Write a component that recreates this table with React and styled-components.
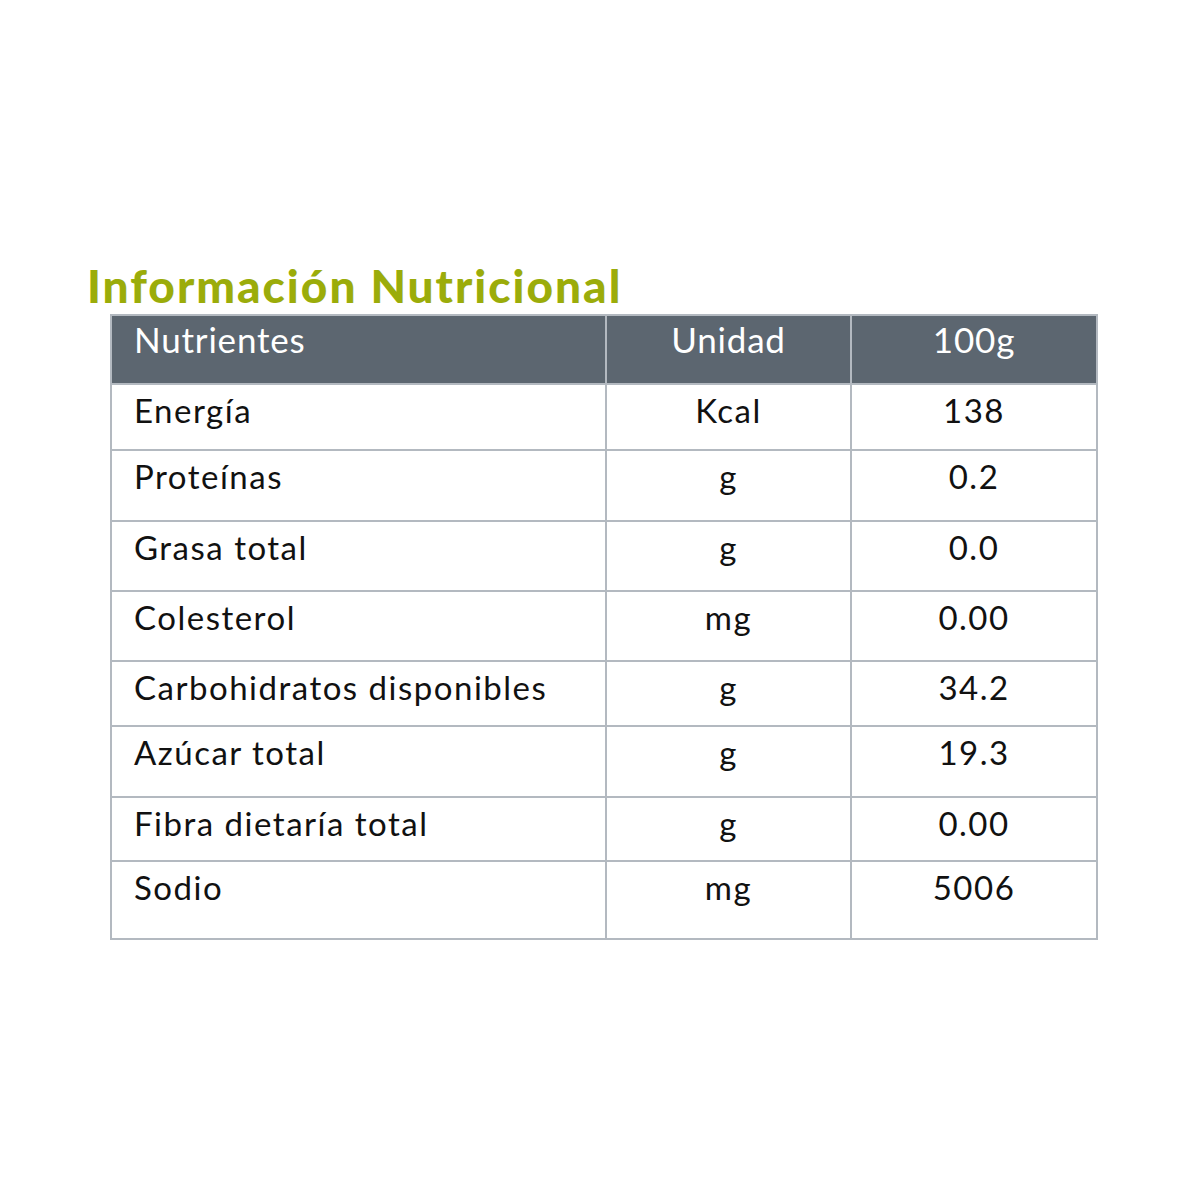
import React from 'react'
import styled, { createGlobalStyle } from 'styled-components'

const GlobalStyle = createGlobalStyle`
  html, body {
    margin: 0;
    padding: 0;
    background: #ffffff;
  }
`

const ROWS = [
  { name: 'Energía', unit: 'Kcal', value: '138', height: 66 },
  { name: 'Proteínas', unit: 'g', value: '0.2', height: 71 },
  { name: 'Grasa total', unit: 'g', value: '0.0', height: 70 },
  { name: 'Colesterol', unit: 'mg', value: '0.00', height: 70 },
  { name: 'Carbohidratos disponibles', unit: 'g', value: '34.2', height: 65 },
  { name: 'Azúcar total', unit: 'g', value: '19.3', height: 71 },
  { name: 'Fibra dietaría total', unit: 'g', value: '0.00', height: 64 },
  { name: 'Sodio', unit: 'mg', value: '5006', height: 78 }
]

const App = () => {
  return (
    <Page>
      <GlobalStyle />
      <Title>Información Nutricional</Title>
      <Table>
        <colgroup>
          <col style={{ width: 495 }} />
          <col style={{ width: 245 }} />
          <col style={{ width: 246 }} />
        </colgroup>
        <thead>
          <HeadRow>
            <HeadCell>Nutrientes</HeadCell>
            <HeadCell $center>Unidad</HeadCell>
            <HeadCell $center>100g</HeadCell>
          </HeadRow>
        </thead>
        <tbody>
          {ROWS.map((row) => (
            <Row key={row.name} $height={row.height}>
              <Cell>{row.name}</Cell>
              <Cell $center>{row.unit}</Cell>
              <Cell $center>{row.value}</Cell>
            </Row>
          ))}
        </tbody>
      </Table>
    </Page>
  )
}

const Page = styled.div`
  width: 1195px;
  height: 1195px;
  padding: 262px 0 0 87px;
  box-sizing: border-box;
  font-family: Lato, "Open Sans", sans-serif;
`

const Title = styled.h1`
  margin: 0 0 4px 0;
  font-size: 46px;
  line-height: 48px;
  font-weight: 900;
  color: #9bac0a;
  letter-spacing: 2px;
`

const Table = styled.table`
  margin-left: 23px;
  width: 987px;
  border-collapse: collapse;
  table-layout: fixed;
  border: 2px solid #b3b9c0;
`

const HeadRow = styled.tr`
  height: 69px;
  background: #5c6670;
`

const HeadCell = styled.th`
  padding: 2px 22px 0 22px;
  vertical-align: top;
  text-align: ${(p) => (p.$center ? 'center' : 'left')};
  font-size: 35px;
  line-height: 42px;
  font-weight: 400;
  letter-spacing: 0.8px;
  color: #ffffff;
  border: 2px solid #b3b9c0;
  border-top: none;
`

const Row = styled.tr`
  height: ${(p) => p.$height}px;
`

const Cell = styled.td`
  padding: 4px 22px 0 22px;
  vertical-align: top;
  text-align: ${(p) => (p.$center ? 'center' : 'left')};
  font-size: 33px;
  line-height: 42px;
  letter-spacing: 1.5px;
  color: #111111;
  border: 2px solid #b3b9c0;
  box-sizing: border-box;
`

export default App
